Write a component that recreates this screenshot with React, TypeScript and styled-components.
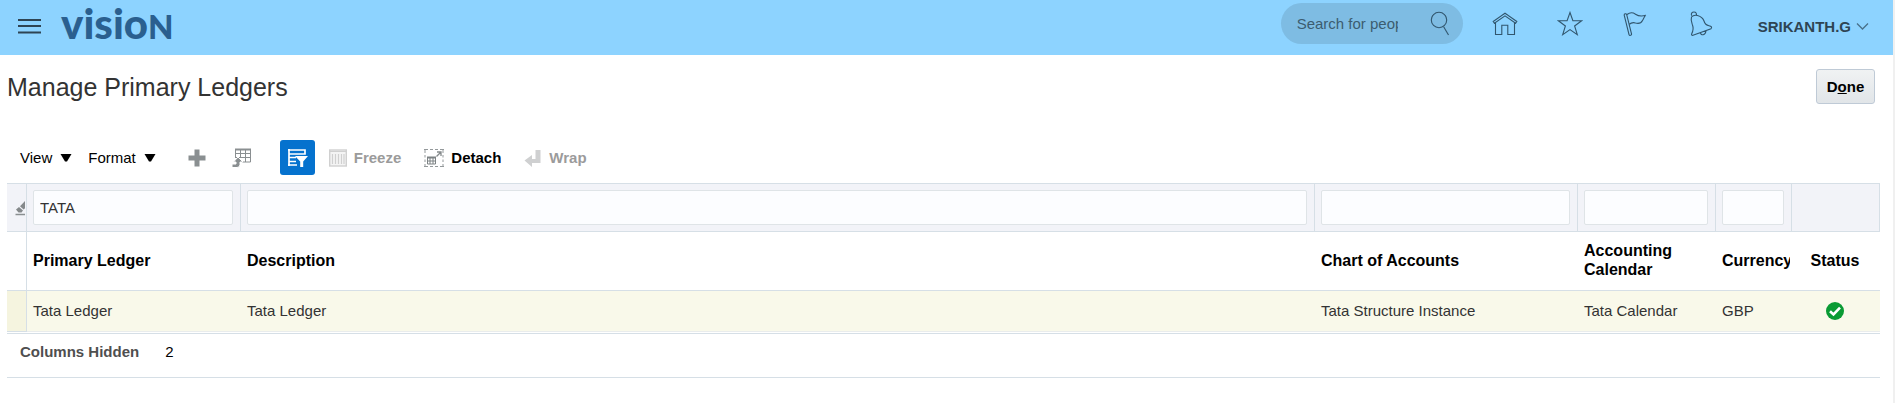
import React from "react";
import styled, { createGlobalStyle } from "styled-components";

const GlobalStyle = createGlobalStyle`
  *, *::before, *::after { box-sizing: border-box; }
  body {
    margin: 0;
    background: #ffffff;
    color: #333333;
    font: 15px/18px "Liberation Sans", Arial, Helvetica, sans-serif;
  }
  button, input { font: inherit; }
`;

const line = "#d6dfe6";

const Page = styled.div`
  min-height: 100vh;
  border-right: 2px solid #f0f0f0;
`;

const TopBar = styled.header`
  display: flex;
  align-items: center;
  justify-content: space-between;
  height: 55px;
  padding: 0 24px 0 18px;
  background: #8dd3ff;
`;

const Brand = styled.div`
  display: flex;
  align-items: center;
  gap: 20px;
`;

const BareButton = styled.button`
  display: flex;
  align-items: center;
  padding: 0;
  border: 0;
  background: none;
  color: #2e4453;
  cursor: pointer;
`;

const Logo = styled.a`
  height: 55px;
  color: #2a5f8f;
  font: 900 42px/46px Lato, "Open Sans", sans-serif;
  text-decoration: none;
`;

const LogoCap = styled.span`
  font-size: 33px;
`;

const Tools = styled.div`
  display: flex;
  align-items: center;
  height: 47px;
  align-self: flex-start;
`;

const SearchBox = styled.form`
  display: flex;
  align-items: center;
  justify-content: space-between;
  width: 182px;
  height: 41px;
  margin-right: 29px;
  padding: 0 13px 0 16px;
  border-radius: 21px;
  background: #7ebce3;
`;

const SearchInput = styled.input`
  width: 101px;
  padding: 0;
  border: 0;
  outline: 0;
  background: transparent;
  color: #35566b;
  &::placeholder { color: #3c5c70; opacity: 1; }
`;

const IconNav = styled.nav`
  display: flex;
  gap: 39px;
`;

const UserButton = styled(BareButton)`
  gap: 5px;
  margin: 6px 0 0 45px;
  font-weight: bold;
`;

const Main = styled.main`
  padding: 14px 13px 0 7px;
`;

const TitleRow = styled.div`
  display: flex;
  align-items: center;
  justify-content: space-between;
  padding-right: 5px;
`;

const Title = styled.h1`
  margin: 0;
  font-size: 25px;
  line-height: 30px;
  font-weight: normal;
`;

const DoneButton = styled.button`
  width: 59px;
  height: 35px;
  padding: 0;
  border: 1px solid #bfcad6;
  border-radius: 3px;
  background: linear-gradient(#f0f2f3, #e1e5e8);
  color: #000000;
  font-weight: bold;
`;

const Toolbar = styled.div`
  display: flex;
  align-items: center;
  height: 35px;
  margin: 36px 0 8px;
  padding-left: 13px;
`;

const MenuButton = styled(BareButton)`
  gap: 8px;
  margin-right: 16px;
  color: #000000;
`;

const ToolGroup = styled.div`
  display: flex;
  align-items: center;
  gap: 26px;
  margin: 0 28px 0 16px;
`;

const FilterToggle = styled(BareButton)`
  justify-content: center;
  width: 35px;
  height: 35px;
  margin-right: 14px;
  border-radius: 3px;
  background: #0572ce;
`;

const ActionButton = styled(BareButton)`
  gap: 7px;
  margin-right: 23px;
  color: #000000;
  font-weight: bold;
  &:disabled { color: #9b9b9b; cursor: default; }
`;

const Grid = styled.table`
  width: 100%;
  table-layout: fixed;
  border-collapse: separate;
  border-spacing: 0;
`;

const Col = styled.col<{ $w?: number }>`
  width: ${(p) => (p.$w ? `${p.$w}px` : "auto")};
`;

const FilterCell = styled.td`
  height: 49px;
  padding: 0 7px 0 6px;
  border: 1px solid ${line};
  border-left: 0;
  background: #f2f3f8;
  overflow: hidden;
`;

const EraseCell = styled(FilterCell)`
  padding: 0 0 0 8px;
`;

const FilterInput = styled.input`
  display: block;
  width: 100%;
  height: 35px;
  padding: 0 6px;
  border: 1px solid #dfe4e7;
  border-radius: 2px;
  outline: 0;
  background: #fcfdff;
  color: #333333;
`;

const HeadCell = styled.th<{ $center?: boolean }>`
  height: 59px;
  padding: ${(p) => (p.$center ? "0 2px 2px 0" : "0 2px 2px 6px")};
  border-bottom: 1px solid ${line};
  color: #000000;
  font-size: 16px;
  line-height: 19px;
  text-align: ${(p) => (p.$center ? "center" : "left")};
`;

const HeadText = styled.div`
  overflow: hidden;
`;

const DataCell = styled.td<{ $center?: boolean }>`
  height: 41px;
  padding: ${(p) => (p.$center ? "0 2px 0 0" : "0 6px")};
  border-bottom: 1px solid #e9ecec;
  background: #f9f9ea;
  text-align: ${(p) => (p.$center ? "center" : "left")};
  svg { display: block; margin: 0 auto; }
`;

const HeadGutter = styled.td`
  border-right: 1px solid ${line};
  border-bottom: 1px solid ${line};
`;

const RowGutter = styled.td`
  border-right: 1px solid ${line};
  border-bottom: 1px solid ${line};
  background: #f5f4df;
`;

const Footer = styled.div`
  display: flex;
  align-items: center;
  gap: 26px;
  height: 45px;
  margin-top: 1px;
  padding: 0 13px 8px;
  border-top: 1px solid ${line};
  border-bottom: 1px solid ${line};
  color: #000000;
`;

const FooterLabel = styled.span`
  color: #4f4f4f;
  font-weight: bold;
`;

type IconProps = { w: number; h: number; children: React.ReactNode };
const LineIcon = ({ w, h, children }: IconProps) => (
  <svg width={w} height={h} viewBox={`0 0 ${w} ${h}`} fill="none" stroke="#31566e" strokeWidth="1.1" aria-hidden="true">
    {children}
  </svg>
);

const Caret = () => (
  <svg width="12" height="9" viewBox="0 0 12 9" aria-hidden="true">
    <path d="M0.5 1h11L7 8.5H5z" fill="#000" />
  </svg>
);

const columns = [
  { name: "Primary Ledger", width: 214, filter: "TATA", value: "Tata Ledger" },
  { name: "Description", width: undefined, filter: "", value: "Tata Ledger" },
  { name: "Chart of Accounts", width: 263, filter: "", value: "Tata Structure Instance" },
  { name: "Accounting Calendar", width: 138, filter: "", value: "Tata Calendar" },
  { name: "Currency", width: 76, filter: "", value: "GBP" },
];

export default function App() {
  return (
    <>
      <GlobalStyle />
      <Page>
        <TopBar>
          <Brand>
            <BareButton aria-label="Navigator">
              <svg width="23" height="18" viewBox="0 0 23 18" aria-hidden="true">
                <path d="M0 1h23M0 7h23M0 13.500h23" stroke="#2e4453" strokeWidth="1.800" />
              </svg>
            </BareButton>
            <Logo href="#">visio<LogoCap>N</LogoCap></Logo>
          </Brand>
          <Tools>
            <SearchBox onSubmit={(e) => e.preventDefault()}>
              <SearchInput aria-label="Search" placeholder="Search for people and content" />
              <BareButton aria-label="Run search">
                <LineIcon w={20} h={26}>
                  <circle cx="9" cy="9" r="7.7" />
                  <path d="M13.5 15.5L18.5 24" />
                </LineIcon>
              </BareButton>
            </SearchBox>
            <IconNav>
              <BareButton aria-label="Home">
                <LineIcon w={26} h={26}>
                  <path d="M1.2 10.500L13 2.200l11.800 8.300-1.200 1.800L13 4.900 2.400 12.300zM3.500 12v11.500h6.300v-9.300h6v9.300h6.700V12" />
                </LineIcon>
              </BareButton>
              <BareButton aria-label="Favorites">
                <LineIcon w={26} h={26}>
                  <path d="M13 1.500l2.900 8.300h8.700l-7 5.200 2.700 8.700L13 18.600l-7.300 5.100L8.400 15l-7-5.200h8.700z" />
                </LineIcon>
              </BareButton>
              <BareButton aria-label="Watchlist">
                <LineIcon w={26} h={26}>
                  <path d="M2.200 4.200a1.300 1.300 0 0 1 2.500-.6l4.800 19.200a1.300 1.300 0 0 1-2.500.7zM5 3.500c3-2.300 6-2 8.500-.3 3 2 6.500 2.300 10.300 1-1.800 1.500-2.100 3.500-3.300 5.300-1.300 2.500-4.500 3.200-7 2.500-2.500-.9-4.500-.2-6.500 1.500" />
                </LineIcon>
              </BareButton>
              <BareButton aria-label="Notifications">
                <LineIcon w={26} h={26}>
                  <path transform="translate(2 0)" d="M2.800 4.800c-1.300-2 .2-3.800 2.200-3.800 2 0 2.800 1.500 2.300 3M2.500 6C4 4.300 6 3.800 8.500 4.500c3 .8 5.500 2.500 6.500 5.500.7 2.500 2 4.300 5 4.700 2.500.5 3.300 1.600 2 3L4 24.300c-1.300.3-1.800-.6-1.300-1.600 1.600-3 2-5.500.8-8.700C2.500 11 1.500 9 2.500 6zM11.500 21.800c.5 3 5 2.800 5.500-2" />
                </LineIcon>
              </BareButton>
            </IconNav>
            <UserButton>
              SRIKANTH.G
              <svg width="13" height="9" viewBox="0 0 13 9" fill="none" aria-hidden="true">
                <path d="M1 1.500l5.500 5.500L12 1.500" stroke="#48708a" strokeWidth="1.300" />
              </svg>
            </UserButton>
          </Tools>
        </TopBar>
        <Main>
          <TitleRow>
            <Title>Manage Primary Ledgers</Title>
            <DoneButton>D<u>o</u>ne</DoneButton>
          </TitleRow>
          <Toolbar role="toolbar">
            <MenuButton>View<Caret /></MenuButton>
            <MenuButton>Format<Caret /></MenuButton>
            <ToolGroup>
              <BareButton aria-label="Create">
                <svg width="18" height="18" viewBox="0 0 18 18" aria-hidden="true">
                  <path d="M6.500 0.500h5v6h6v5h-6v6h-5v-6h-6v-5h6z" fill="#8a8f91" />
                </svg>
              </BareButton>
              <BareButton aria-label="Go to selected">
                <svg width="20" height="20" viewBox="0 0 20 20" fill="none" aria-hidden="true">
                  <path d="M3.500 1v8M18.500 1v13H10M3 5.500h16M3 9.500h16M8.500 1v9M13.500 1v13" stroke="#8a8f91" />
                  <path d="M3 1.500h16" stroke="#8a8f91" strokeWidth="2" />
                  <path d="M0 19.500v-3.500h4v-2H1.500L6 9l5 5H8v2.500q0 3-3 3z" fill="#8a8f91" stroke="#fff" />
                </svg>
              </BareButton>
            </ToolGroup>
            <FilterToggle aria-label="Query by Example" aria-pressed="true">
              <svg width="21" height="20" viewBox="0 0 21 20" fill="none" aria-hidden="true">
                <path d="M1 2h17v4H2M2 1v17M1 17h9M2 9.500h7M2 13.500h7" stroke="#fff" strokeWidth="1.700" />
                <path d="M8 8h13l-4.800 5.500v5.500h-3v-5.500z" fill="#fff" />
              </svg>
            </FilterToggle>
            <ActionButton disabled>
              <svg width="18" height="18" viewBox="0 0 18 18" fill="none" aria-hidden="true">
                <rect x="0.700" y="1" width="16.600" height="16" fill="#f4f4f4" stroke="#d0d0d0" strokeWidth="1.400" />
                <path d="M1 2.500h16M3.500 5v10M6.500 5v10M9.500 5v10M12.500 5v10M15 5v10" stroke="#d0d0d0" strokeWidth="1.200" />
              </svg>
              Freeze
            </ActionButton>
            <ActionButton>
              <svg width="20" height="20" viewBox="0 0 20 20" fill="none" aria-hidden="true">
                <path d="M0 1.500h4M6 1.500h3M11 1.500h3M16 1.500h4M0 18.500h4M6 18.500h3M11 18.500h3M16 18.500h4M1 1v4M1 7v2.500M1 11.500v2.500M1 16v3M19 1v4M19 7v2.500M19 11.500v2.500M19 16v3" stroke="#94999b" />
                <path d="M3.500 9.500h8v6.500h-8zM3 13h9M6 10v6M9 10v6" stroke="#7d8284" />
                <path d="M3 9.500h9" stroke="#7d8284" strokeWidth="2" />
                <path d="M12.500 8.500l4-4M13 4h4v4" stroke="#858a8c" strokeWidth="1.300" />
              </svg>
              Detach
            </ActionButton>
            <ActionButton disabled>
              <svg width="18" height="18" viewBox="0 0 18 18" aria-hidden="true">
                <path d="M11.500 1h5v13H8v4L0.500 11.500 8 6v4h3.500z" fill="#cfd0d1" />
              </svg>
              Wrap
            </ActionButton>
          </Toolbar>
          <Grid>
            <colgroup>
              <Col $w={20} />
              {columns.map((c) => <Col key={c.name} $w={c.width} />)}
              <Col $w={88} />
            </colgroup>
            <thead>
              <tr>
                <EraseCell>
                  <BareButton aria-label="Clear filters">
                    <svg width="10" height="16" viewBox="0 0 10 16" aria-hidden="true">
                      <path d="M0.500 14.500h9.500" stroke="#8a8f91" strokeWidth="1.500" />
                      <path d="M1 9.500l3-2.500 4 3.500-1.500 2H3.500z M5 6.200L10 1v7.300L8.600 9.500z" fill="#85898b" />
                    </svg>
                  </BareButton>
                </EraseCell>
                {columns.map((c) => (
                  <FilterCell key={c.name}>
                    <FilterInput aria-label={`Filter ${c.name}`} defaultValue={c.filter} />
                  </FilterCell>
                ))}
                <FilterCell />
              </tr>
              <tr>
                <HeadGutter />
                {columns.map((c) => (
                  <HeadCell key={c.name} scope="col"><HeadText>{c.name}</HeadText></HeadCell>
                ))}
                <HeadCell scope="col" $center>Status</HeadCell>
              </tr>
            </thead>
            <tbody>
              <tr>
                <RowGutter />
                {columns.map((c) => <DataCell key={c.name}>{c.value}</DataCell>)}
                <DataCell $center>
                  <svg width="18" height="18" viewBox="0 0 18 18" role="img" aria-label="Complete">
                    <circle cx="9" cy="9" r="9" fill="#0a9b34" />
                    <path d="M4 9.200l3.500 3.300L14 5.700" fill="none" stroke="#fff" strokeWidth="2.600" />
                  </svg>
                </DataCell>
              </tr>
            </tbody>
          </Grid>
          <Footer>
            <FooterLabel>Columns Hidden</FooterLabel>
            <span>2</span>
          </Footer>
        </Main>
      </Page>
    </>
  );
}
